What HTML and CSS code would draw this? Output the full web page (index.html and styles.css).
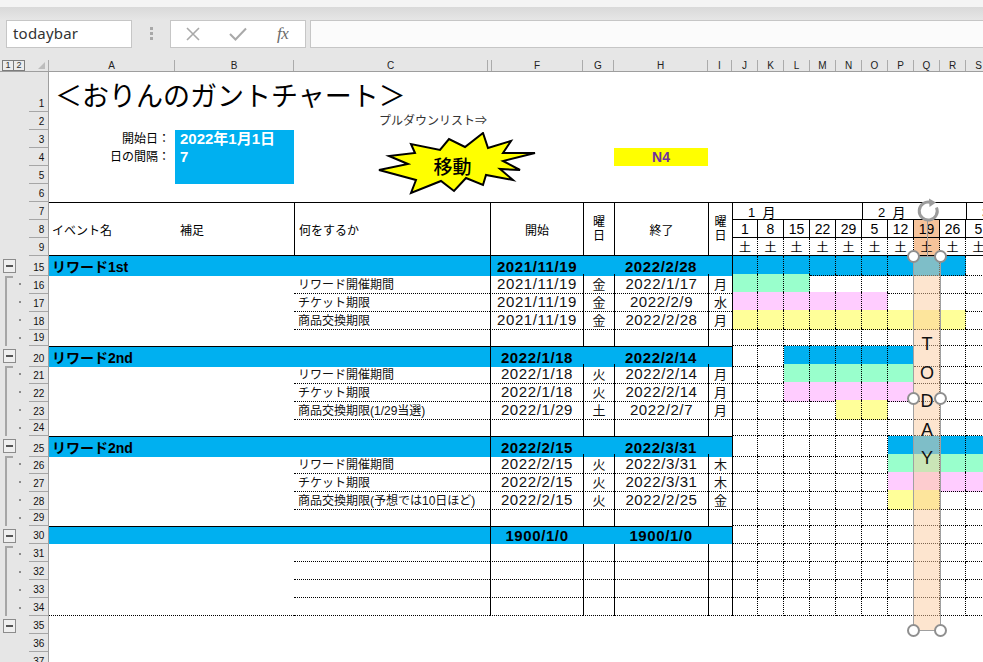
FILE: index.html
```html
<!DOCTYPE html>
<html lang="ja">
<head>
<meta charset="utf-8">
<title>おりんのガントチャート</title>
<link rel="stylesheet" href="styles.css">
</head>
<body>
<div class="topstrip"></div>
<div class="fbar">
  <div class="namebox">todaybar</div>
  <div class="grip"><i></i><i></i><i></i></div>
  <div class="fbtns">
    <span class="fb"><svg width="16" height="14" viewBox="0 0 16 14"><path d="M2 1 L14 13 M14 1 L2 13" stroke="#a9a9a9" stroke-width="1.6" fill="none"/></svg></span>
    <span class="fb"><svg width="18" height="14" viewBox="0 0 18 14"><path d="M1 7 L6.5 12.5 L17 1.5" stroke="#a9a9a9" stroke-width="2" fill="none"/></svg></span>
    <span class="fb fx">fx</span>
  </div>
  <div class="finput"></div>
</div>
<div class="colhdr">
  <div class="corner"><span class="lv">1</span><span class="lv">2</span><span class="sa"></span></div>
  <div class="ch">A</div><div class="ch">B</div><div class="ch">C</div><div class="ch"></div><div class="ch">F</div><div class="ch">G</div><div class="ch">H</div><div class="ch">I</div><div class="ch">J</div><div class="ch">K</div><div class="ch">L</div><div class="ch">M</div><div class="ch">N</div><div class="ch">O</div><div class="ch">P</div><div class="ch">Q</div><div class="ch">R</div><div class="ch">S</div>
</div>
<div class="sheet">
  <div class="r r1"><i class="ol"></i><b class="rn">1</b><div class="title">＜おりんのガントチャート＞</div></div>
  <div class="r"><i class="ol"></i><b class="rn">2</b><div class="pull">プルダウンリスト⇒</div></div>
  <div class="r"><i class="ol"></i><b class="rn">3</b><div class="lbl">開始日：</div><div class="bb">2022年1月1日</div></div>
  <div class="r"><i class="ol"></i><b class="rn">4</b><div class="lbl">日の間隔：</div><div class="bb">7</div><div class="n4">N4</div></div>
  <div class="r"><i class="ol"></i><b class="rn">5</b><div class="lbl"></div><div class="bb"></div></div>
  <div class="r"><i class="ol"></i><b class="rn">6</b></div>

  <div class="hdr">
    <i class="ol ol3"></i>
    <b class="rn g1">7</b><b class="rn g2">8</b><b class="rn g3">9</b>
    <div class="hc hA">イベント名</div>
    <div class="hc hB">補足</div>
    <div class="hc hC">何をするか</div>
    <div class="hc hF">開始</div>
    <div class="hc hG"><span>曜</span><span>日</span></div>
    <div class="hc hH">終了</div>
    <div class="hc hI"><span>曜</span><span>日</span></div>
    <div class="mo mo1">1&nbsp; 月</div>
    <div class="mo mo2">2&nbsp; 月</div>
    <div class="mo mo3">3&nbsp; 月</div>
    <div class="dy j">1</div><div class="dy">8</div><div class="dy">15</div><div class="dy">22</div><div class="dy">29</div><div class="dy">5</div><div class="dy">12</div><div class="dy tq">19</div><div class="dy">26</div><div class="dy">5</div>
    <div class="sd j">土</div><div class="sd">土</div><div class="sd">土</div><div class="sd">土</div><div class="sd">土</div><div class="sd">土</div><div class="sd">土</div><div class="sd tq">土</div><div class="sd">土</div><div class="sd">土</div>
  </div>

  <!-- 15 -->
  <div class="r"><i class="ol bx"></i><b class="rn">15</b><div class="bl grp">リワード1st</div><div class="bl dt vl bd">2021/11/19</div><div class="bl"></div><div class="bl dt bd">2022/2/28</div><div class="bl"></div><span class="g j b"></span><span class="g b"></span><span class="g b"></span><span class="g b"></span><span class="g b"></span><span class="g b"></span><span class="g b"></span><span class="g b"></span><span class="g b"></span><span class="g"></span></div>
  <div class="r"><i class="ol br top"></i><b class="rn">16</b><div class="ab"></div><div class="cc d">リワード開催期間</div><div class="dt vl d">2021/11/19</div><div class="dw vl d">金</div><div class="dt vl d">2022/1/17</div><div class="dw vl d">月</div><span class="g j gr"></span><span class="g gr"></span><span class="g gr"></span><span class="g"></span><span class="g"></span><span class="g"></span><span class="g"></span><span class="g"></span><span class="g"></span><span class="g"></span></div>
  <div class="r"><i class="ol br"></i><b class="rn">17</b><div class="ab"></div><div class="cc d">チケット期限</div><div class="dt vl d">2021/11/19</div><div class="dw vl d">金</div><div class="dt vl d">2022/2/9</div><div class="dw vl d">水</div><span class="g j pk"></span><span class="g pk"></span><span class="g pk"></span><span class="g pk"></span><span class="g pk"></span><span class="g pk"></span><span class="g"></span><span class="g"></span><span class="g"></span><span class="g"></span></div>
  <div class="r"><i class="ol br"></i><b class="rn">18</b><div class="ab"></div><div class="cc d">商品交換期限</div><div class="dt vl d">2021/11/19</div><div class="dw vl d">金</div><div class="dt vl d">2022/2/28</div><div class="dw vl d">月</div><span class="g j yl"></span><span class="g yl"></span><span class="g yl"></span><span class="g yl"></span><span class="g yl"></span><span class="g yl"></span><span class="g yl"></span><span class="g yl"></span><span class="g yl"></span><span class="g"></span></div>
  <div class="r"><i class="ol br"></i><b class="rn">19</b><div class="ab"></div><div class="cc"></div><div class="vl"></div><div class="vl"></div><div class="vl"></div><div class="vl"></div><span class="g j"></span><span class="g"></span><span class="g"></span><span class="g"></span><span class="g"></span><span class="g"></span><span class="g"></span><span class="g"></span><span class="g"></span><span class="g"></span></div>

  <!-- 20 -->
  <div class="r"><i class="ol bx"></i><b class="rn">20</b><div class="bl tp grp">リワード2nd</div><div class="bl tp dt vl bd">2022/1/18</div><div class="bl tp"></div><div class="bl tp dt bd">2022/2/14</div><div class="bl tp"></div><span class="g j"></span><span class="g"></span><span class="g b"></span><span class="g b"></span><span class="g b"></span><span class="g b"></span><span class="g b"></span><span class="g"></span><span class="g"></span><span class="g"></span></div>
  <div class="r"><i class="ol br top"></i><b class="rn">21</b><div class="ab"></div><div class="cc d">リワード開催期間</div><div class="dt vl d">2022/1/18</div><div class="dw vl d">火</div><div class="dt vl d">2022/2/14</div><div class="dw vl d">月</div><span class="g j"></span><span class="g"></span><span class="g gr"></span><span class="g gr"></span><span class="g gr"></span><span class="g gr"></span><span class="g gr"></span><span class="g"></span><span class="g"></span><span class="g"></span></div>
  <div class="r"><i class="ol br"></i><b class="rn">22</b><div class="ab"></div><div class="cc d">チケット期限</div><div class="dt vl d">2022/1/18</div><div class="dw vl d">火</div><div class="dt vl d">2022/2/14</div><div class="dw vl d">月</div><span class="g j"></span><span class="g"></span><span class="g pk"></span><span class="g pk"></span><span class="g pk"></span><span class="g pk"></span><span class="g pk"></span><span class="g"></span><span class="g"></span><span class="g"></span></div>
  <div class="r"><i class="ol br"></i><b class="rn">23</b><div class="ab"></div><div class="cc d">商品交換期限(1/29当選)</div><div class="dt vl d">2022/1/29</div><div class="dw vl d">土</div><div class="dt vl d">2022/2/7</div><div class="dw vl d">月</div><span class="g j"></span><span class="g"></span><span class="g"></span><span class="g"></span><span class="g yl"></span><span class="g yl"></span><span class="g"></span><span class="g"></span><span class="g"></span><span class="g"></span></div>
  <div class="r"><i class="ol br"></i><b class="rn">24</b><div class="ab"></div><div class="cc"></div><div class="vl"></div><div class="vl"></div><div class="vl"></div><div class="vl"></div><span class="g j"></span><span class="g"></span><span class="g"></span><span class="g"></span><span class="g"></span><span class="g"></span><span class="g"></span><span class="g"></span><span class="g"></span><span class="g"></span></div>

  <!-- 25 -->
  <div class="r"><i class="ol bx"></i><b class="rn">25</b><div class="bl tp grp">リワード2nd</div><div class="bl tp dt vl bd">2022/2/15</div><div class="bl tp"></div><div class="bl tp dt bd">2022/3/31</div><div class="bl tp"></div><span class="g j"></span><span class="g"></span><span class="g"></span><span class="g"></span><span class="g"></span><span class="g"></span><span class="g b"></span><span class="g b"></span><span class="g b"></span><span class="g b"></span></div>
  <div class="r"><i class="ol br top"></i><b class="rn">26</b><div class="ab"></div><div class="cc d">リワード開催期間</div><div class="dt vl d">2022/2/15</div><div class="dw vl d">火</div><div class="dt vl d">2022/3/31</div><div class="dw vl d">木</div><span class="g j"></span><span class="g"></span><span class="g"></span><span class="g"></span><span class="g"></span><span class="g"></span><span class="g gr"></span><span class="g gr"></span><span class="g gr"></span><span class="g gr"></span></div>
  <div class="r"><i class="ol br"></i><b class="rn">27</b><div class="ab"></div><div class="cc d">チケット期限</div><div class="dt vl d">2022/2/15</div><div class="dw vl d">火</div><div class="dt vl d">2022/3/31</div><div class="dw vl d">木</div><span class="g j"></span><span class="g"></span><span class="g"></span><span class="g"></span><span class="g"></span><span class="g"></span><span class="g pk"></span><span class="g pk"></span><span class="g pk"></span><span class="g pk"></span></div>
  <div class="r"><i class="ol br"></i><b class="rn">28</b><div class="ab"></div><div class="cc d">商品交換期限(予想では10日ほど)</div><div class="dt vl d">2022/2/15</div><div class="dw vl d">火</div><div class="dt vl d">2022/2/25</div><div class="dw vl d">金</div><span class="g j"></span><span class="g"></span><span class="g"></span><span class="g"></span><span class="g"></span><span class="g"></span><span class="g yl"></span><span class="g yl"></span><span class="g"></span><span class="g"></span></div>
  <div class="r"><i class="ol br"></i><b class="rn">29</b><div class="ab"></div><div class="cc"></div><div class="vl"></div><div class="vl"></div><div class="vl"></div><div class="vl"></div><span class="g j"></span><span class="g"></span><span class="g"></span><span class="g"></span><span class="g"></span><span class="g"></span><span class="g"></span><span class="g"></span><span class="g"></span><span class="g"></span></div>

  <!-- 30 -->
  <div class="r"><i class="ol bx"></i><b class="rn">30</b><div class="bl tp grp"></div><div class="bl tp dt vl bd">1900/1/0</div><div class="bl tp"></div><div class="bl tp dt bd">1900/1/0</div><div class="bl tp"></div><span class="g j"></span><span class="g"></span><span class="g"></span><span class="g"></span><span class="g"></span><span class="g"></span><span class="g"></span><span class="g"></span><span class="g"></span><span class="g"></span></div>
  <div class="r"><i class="ol br top"></i><b class="rn">31</b><div class="ab"></div><div class="cc d"></div><div class="vl d"></div><div class="vl d"></div><div class="vl d"></div><div class="vl d"></div><span class="g j"></span><span class="g"></span><span class="g"></span><span class="g"></span><span class="g"></span><span class="g"></span><span class="g"></span><span class="g"></span><span class="g"></span><span class="g"></span></div>
  <div class="r"><i class="ol br"></i><b class="rn">32</b><div class="ab"></div><div class="cc d"></div><div class="vl d"></div><div class="vl d"></div><div class="vl d"></div><div class="vl d"></div><span class="g j"></span><span class="g"></span><span class="g"></span><span class="g"></span><span class="g"></span><span class="g"></span><span class="g"></span><span class="g"></span><span class="g"></span><span class="g"></span></div>
  <div class="r"><i class="ol br"></i><b class="rn">33</b><div class="ab"></div><div class="cc d"></div><div class="vl d"></div><div class="vl d"></div><div class="vl d"></div><div class="vl d"></div><span class="g j"></span><span class="g"></span><span class="g"></span><span class="g"></span><span class="g"></span><span class="g"></span><span class="g"></span><span class="g"></span><span class="g"></span><span class="g"></span></div>
  <div class="r"><i class="ol br"></i><b class="rn">34</b><div class="ab d"></div><div class="cc d"></div><div class="vl d"></div><div class="vl d"></div><div class="vl d"></div><div class="vl d"></div><span class="g j"></span><span class="g"></span><span class="g"></span><span class="g"></span><span class="g"></span><span class="g"></span><span class="g"></span><span class="g"></span><span class="g"></span><span class="g"></span></div>
  <div class="r"><i class="ol bx"></i><b class="rn">35</b></div>
  <div class="r"><i class="ol"></i><b class="rn">36</b></div>
  <div class="r"><i class="ol"></i><b class="rn">37</b></div>

  <!-- overlays -->
  <div class="star">
    <svg class="starsvg" width="159" height="63" viewBox="-1 -1 159 63"><polygon points="0,37 29,31 10,23 36,20 32,11 61,17 70,6 86,14 104,0 109,15 132,8 124,20 156,20 124,28 141,37 121,36 134,47 107,42 104,52 87,45 75,58 62,48 32,60 37,47" fill="#ffff00" stroke="#000" stroke-width="2" stroke-linejoin="miter"/></svg>
    <span class="startext">移動</span>
  </div>
  <div class="rotline"></div>
  <svg class="rot" width="28" height="28" viewBox="0 0 28 28"><path d="M22.5 10.5 A9 9 0 1 1 17 5.5" fill="none" stroke="#9c9c9c" stroke-width="3"/><path d="M15 1.5 L22 5.5 L15.5 10 Z" fill="#9c9c9c"/></svg>
  <div class="todaybar"><span>T</span><span>O</span><span>D</span><span>A</span><span>Y</span></div>
  <i class="hd h1"></i><i class="hd h2"></i><i class="hd h3"></i><i class="hd h4"></i><i class="hd h5"></i><i class="hd h6"></i>
</div>
</body>
</html>
```
FILE: styles.css
```css
* { box-sizing: border-box; margin: 0; padding: 0; }
html, body { width: 983px; height: 662px; overflow: hidden; background: #fff; }
body { font-family: "Liberation Sans", "Noto Sans CJK JP", sans-serif; color: #000; }

.topstrip { height: 7px; background: #f4f4f4; }
.fbar {
  height: 50px;
  background: linear-gradient(#d9d9d9, #e6e6e6 13px, #e6e6e6);
  padding: 13px 0 0 6px;
  display: flex;
  align-items: flex-start;
}
.namebox {
  width: 126px; height: 28px;
  background: #fff; border: 1px solid #c6c6c6;
  font: 15px "Noto Sans", sans-serif; color: #333;
  padding-left: 6px; line-height: 25px; letter-spacing: 0.2px;
}
.grip { width: 38px; display: flex; flex-direction: column; align-items: center; gap: 2px; padding-top: 7px; }
.grip i { width: 3px; height: 3px; background: #a8a8a8; }
.fbtns { width: 136px; height: 28px; background: #fff; border: 1px solid #c6c6c6; display: flex; }
.fb { width: 45px; display: flex; align-items: center; justify-content: center; }
.fx { font: italic 17px "Liberation Serif", serif; color: #6a6a6a; letter-spacing: -0.5px; }
.finput { flex: 1; height: 28px; margin-left: 4px; background: #fbfbfb; border: 1px solid #c6c6c6; border-right: none; }

.colhdr {
  height: 15px; padding-top: 3px;
  background: #e6e6e6; border-bottom: 1px solid #9e9e9e;
  display: grid;
  grid-template-columns: 49px 126px 119px 194px 4px 91px 31px 94px 24px repeat(10, 26px);
  font-size: 10px; color: #222;
}
.corner { display: flex; align-items: flex-start; padding-left: 2px; border-right: 1px solid #ababab; }
.lv { width: 12px; height: 11px; border: 1px solid #7c7c7c; font-size: 9px; line-height: 9px; text-align: center; background: #ececec; color: #333; }
.lv + .lv { border-left: none; width: 11px; }
.sa { width: 0; height: 0; margin: 2px 3px 0 auto; border-left: 7px solid transparent; border-bottom: 7px solid #bdbdbd; }
.ch { border-right: 1px solid #ababab; text-align: center; line-height: 11px; }

.sheet {
  position: relative;
  height: 590px; overflow: hidden;
  background: linear-gradient(90deg, #e6e6e6 48px, #fff 48px);
}
.r, .hdr {
  display: grid;
  grid-template-columns: 29px 20px 126px 119px 196px 93px 31px 94px 24px repeat(10, 26px);
}
.r { height: 18px; }
.r1 { height: 40px; }
.hdr { grid-template-rows: 18px 18px 18px; }

.ol { grid-column: 1; display: flex; align-items: flex-start; }
.ol3 { grid-row: 1 / 4; }
.ol.bx::before {
  content: ""; width: 11px; height: 12px; margin: 3px 0 0 3px;
  border: 1px solid #8c8c8c;
  background: #efefef linear-gradient(#555, #555) center / 7px 2px no-repeat;
}
.ol.br { align-items: stretch; }
.ol.br::before { content: ""; width: 6px; margin-left: 5px; border-left: 2px solid #a6a6a6; }
.ol.br.top::before { margin-top: 2px; border-top: 2px solid #a6a6a6; }
.ol.br::after { content: ""; align-self: flex-start; width: 2px; height: 2px; margin: 9px 0 0 6px; background: #8c8c8c; }

.rn {
  grid-column: 2;
  border-right: 1px solid #9e9e9e; border-bottom: 1px solid #a6a6a6;
  font-size: 10px; font-weight: normal; line-height: 1; color: #111; letter-spacing: -0.2px;
  display: flex; align-items: flex-end; justify-content: flex-end;
  padding: 0 4px 2px 0;
}
.g1 { grid-row: 1; } .g2 { grid-row: 2; } .g3 { grid-row: 3; }

.title {
  grid-column: 3 / -1; align-self: end;
  font-family: "Noto Sans CJK JP", sans-serif;
  font-size: 27px; line-height: 1; white-space: nowrap;
  padding: 0 0 4px 6px;
}
.pull { grid-column: 5; font-size: 12px; color: #333; text-align: right; padding-right: 3px; line-height: 18px; white-space: nowrap; }
.lbl { grid-column: 3; font-size: 12px; text-align: right; padding-right: 5px; line-height: 18px; }
.bb { grid-column: 4; background: #00b0f0; color: #fff; font-weight: bold; font-size: 15px; padding-left: 5px; line-height: 18px; }
.n4 { grid-column: 8; background: #ffff00; color: #7030a0; font-weight: bold; font-size: 14px; text-align: center; line-height: 18px; }

.hc { border-top: 1px solid #000; border-bottom: 1px solid #000; display: flex; align-items: center; font-size: 12px; grid-row: 1 / 4; }
.hA { grid-column: 3; padding-left: 3px; }
.hB { grid-column: 4; padding-left: 5px; }
.hC { grid-column: 5; padding-left: 4px; border-left: 1px solid #000; }
.hF { grid-column: 6; justify-content: center; border-left: 1px solid #000; }
.hG { grid-column: 7; flex-direction: column; justify-content: center; line-height: 14px; border-left: 1px solid #000; }
.hH { grid-column: 8; justify-content: center; border-left: 1px solid #000; }
.hI { grid-column: 9; flex-direction: column; justify-content: center; line-height: 14px; border-left: 1px solid #000; }

.mo {
  grid-row: 1; border-top: 1px solid #000; border-bottom: 1px solid #000; border-left: 1px solid #000;
  font-size: 13px; padding-left: 15px; display: flex; align-items: center; white-space: nowrap; overflow: hidden;
}
.mo1 { grid-column: 10 / 15; }
.mo2 { grid-column: 15 / 19; }
.mo3 { grid-column: 19 / 20; }
.dy { grid-row: 2; border-right: 1px solid #000; border-bottom: 1px solid #000; font-size: 14px; display: flex; align-items: center; justify-content: center; }
.sd { grid-row: 3; border-right: 1px dotted #000; border-bottom: 1px solid #000; font-size: 12px; display: flex; align-items: center; justify-content: center; }
.dy.j, .sd.j { border-left: 1px solid #000; }
.tq { background: #f6c39a; }

.ab { grid-column: span 2; }
.grp { grid-column: span 3; font-weight: bold; font-size: 14px; padding-left: 3px; display: flex; align-items: center; white-space: nowrap; }
.cc { font-size: 12px; padding-left: 4px; display: flex; align-items: center; white-space: nowrap; color: #111; }
.dt { font-size: 15px; letter-spacing: 0.6px; display: flex; align-items: center; justify-content: center; color: #111; }
.bd { font-weight: bold; color: #000; }
.dw { font-size: 13px; display: flex; align-items: center; justify-content: center; color: #111; }
.vl { border-left: 1px solid #000; }
.d { border-bottom: 1px dotted #000; }
.bl { background: #00b0f0; }
.tp { border-top: 1px solid #000; }

.g { border-right: 1px dotted #000; border-bottom: 1px dotted #000; }
.g.j { border-left: 1px solid #000; }
.g.b { background: #00b0f0; }
.g.gr { background: #99ffcc; }
.g.pk { background: #ffccff; }
.g.yl { background: #ffff99; }

/* overlays */
.star { position: absolute; left: 378px; top: 60px; width: 159px; height: 63px; display: grid; }
.starsvg { grid-area: 1 / 1; }
.startext {
  grid-area: 1 / 1; align-self: center; justify-self: center;
  font-family: "Noto Sans CJK JP", sans-serif; font-size: 19px; font-weight: 500;
  margin: 4px 10px 0 0;
}
.rotline { position: absolute; left: 927px; top: 148px; width: 1px; height: 36px; background: #9c9c9c; }
.rot { position: absolute; left: 914px; top: 125px; }
.todaybar {
  position: absolute; left: 913px; top: 184px; width: 28px; height: 375px;
  background: rgba(251, 203, 159, 0.5);
  border: 1px solid #a0a0a0;
  display: flex; flex-direction: column; align-items: center;
  padding-top: 73px;
  font: 18px "Liberation Sans", sans-serif; line-height: 28.5px; color: #111;
}
.hd { position: absolute; width: 13px; height: 13px; border-radius: 50%; background: #fff; border: 2px solid #8f8f8f; }
.h1 { left: 907px; top: 178px; } .h2 { left: 934px; top: 178px; }
.h3 { left: 907px; top: 320px; } .h4 { left: 934px; top: 320px; }
.h5 { left: 907px; top: 552px; } .h6 { left: 934px; top: 552px; }
```
